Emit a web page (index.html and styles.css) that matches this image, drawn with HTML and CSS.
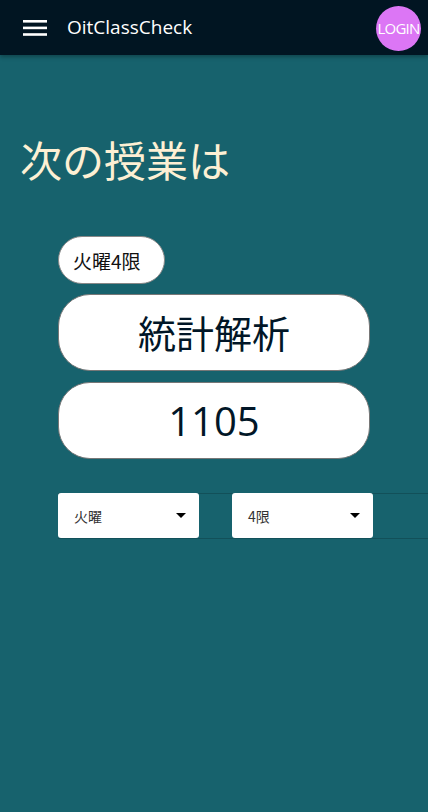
FILE: index.html
```html
<!DOCTYPE html>
<html lang="ja">
<head>
<meta charset="utf-8">
<link rel="stylesheet" href="styles.css">
</head>
<body>
<header class="appbar">
  <button class="menu" aria-label="menu">
    <svg width="24" height="18" viewBox="0 0 24 18"><rect x="0" y="1" width="24" height="2.6" fill="#fff"/><rect x="0" y="7.6" width="24" height="2.6" fill="#fff"/><rect x="0" y="14.2" width="24" height="2.6" fill="#fff"/></svg>
  </button>
  <div class="title">OitClassCheck</div>
  <button class="login">LOGIN</button>
</header>
<main class="content">
  <h1 class="heading">次の授業は</h1>
  <div class="cards">
    <div class="chip">火曜4限</div>
    <div class="card name">統計解析</div>
    <div class="card room">1105</div>
  </div>
  <div class="selects">
    <div class="select"><span>火曜</span><span class="arrow"></span></div>
    <div class="select"><span>4限</span><span class="arrow"></span></div>
  </div>
</main>
</body>
</html>
```
FILE: styles.css
```css
html, body { margin: 0; padding: 0; }
body {
  width: 428px;
  height: 812px;
  background: #17626d;
  font-family: "Open Sans", "Noto Sans CJK JP", sans-serif;
  overflow: hidden;
}
.appbar {
  height: 55px;
  background: #011522;
  display: flex;
  align-items: center;
  box-shadow: 0 2px 4px rgba(0,0,0,0.3);
}
.menu {
  background: none;
  border: 0;
  padding: 0;
  margin-left: 23px;
  width: 24px;
  height: 18px;
  display: flex;
}
.title {
  margin-left: 20px;
  color: #fff;
  font-size: 19px;
  flex: 1;
  padding-bottom: 1px;
}
.login {
  width: 45px;
  height: 45px;
  border-radius: 50%;
  border: 0;
  background: #dc76f5;
  color: #fff;
  font-family: "Open Sans", sans-serif;
  font-size: 15px;
  letter-spacing: -0.8px;
  padding: 0;
  margin-right: 7px;
  margin-top: 1px;
}
.content { padding: 0; }
.heading {
  margin: 80px 0 0 20px;
  font-weight: normal;
  font-size: 42px;
  line-height: 48px;
  color: #fdf0d4;
  font-family: "Noto Sans CJK JP", sans-serif;
}
.cards {
  margin: 53px 0 0 58px;
  display: flex;
  flex-direction: column;
  align-items: flex-start;
  gap: 10px;
}
.chip {
  background: #fff;
  border: 1px solid #888;
  border-radius: 24px;
  height: 48px;
  box-sizing: border-box;
  padding: 0 23px 0 14px;
  display: flex;
  align-items: center;
  font-size: 19px;
  color: #111;
  font-family: "Noto Sans CJK JP", sans-serif;
}
.card {
  width: 312px;
  height: 77px;
  box-sizing: border-box;
  background: #fff;
  border: 1px solid #777;
  border-radius: 32px;
  display: flex;
  align-items: center;
  justify-content: center;
  color: #011627;
}
.name {
  font-size: 38px;
  font-family: "Noto Sans CJK JP", sans-serif;
  padding-bottom: 2px;
}
.room {
  font-size: 40px;
  font-family: "Open Sans", sans-serif;
  margin-top: 1px;
}
.selects {
  margin-top: 34px;
  margin-left: 58px;
  display: flex;
  gap: 33px;
  border-top: 1px solid rgba(0,0,0,0.18);
  border-bottom: 1px solid rgba(0,0,0,0.18);
  height: 44px;
}
.select {
  width: 141px;
  height: 45px;
  margin-top: -1px;
  box-sizing: border-box;
  background: #fff;
  border-radius: 3px;
  display: flex;
  align-items: center;
  justify-content: space-between;
  padding: 0 13px 0 16px;
  font-size: 14px;
  color: #333;
  font-family: "Noto Sans CJK JP", sans-serif;
}
.arrow {
  width: 0;
  height: 0;
  border-left: 5px solid transparent;
  border-right: 5px solid transparent;
  border-top: 5px solid #000;
}
```
